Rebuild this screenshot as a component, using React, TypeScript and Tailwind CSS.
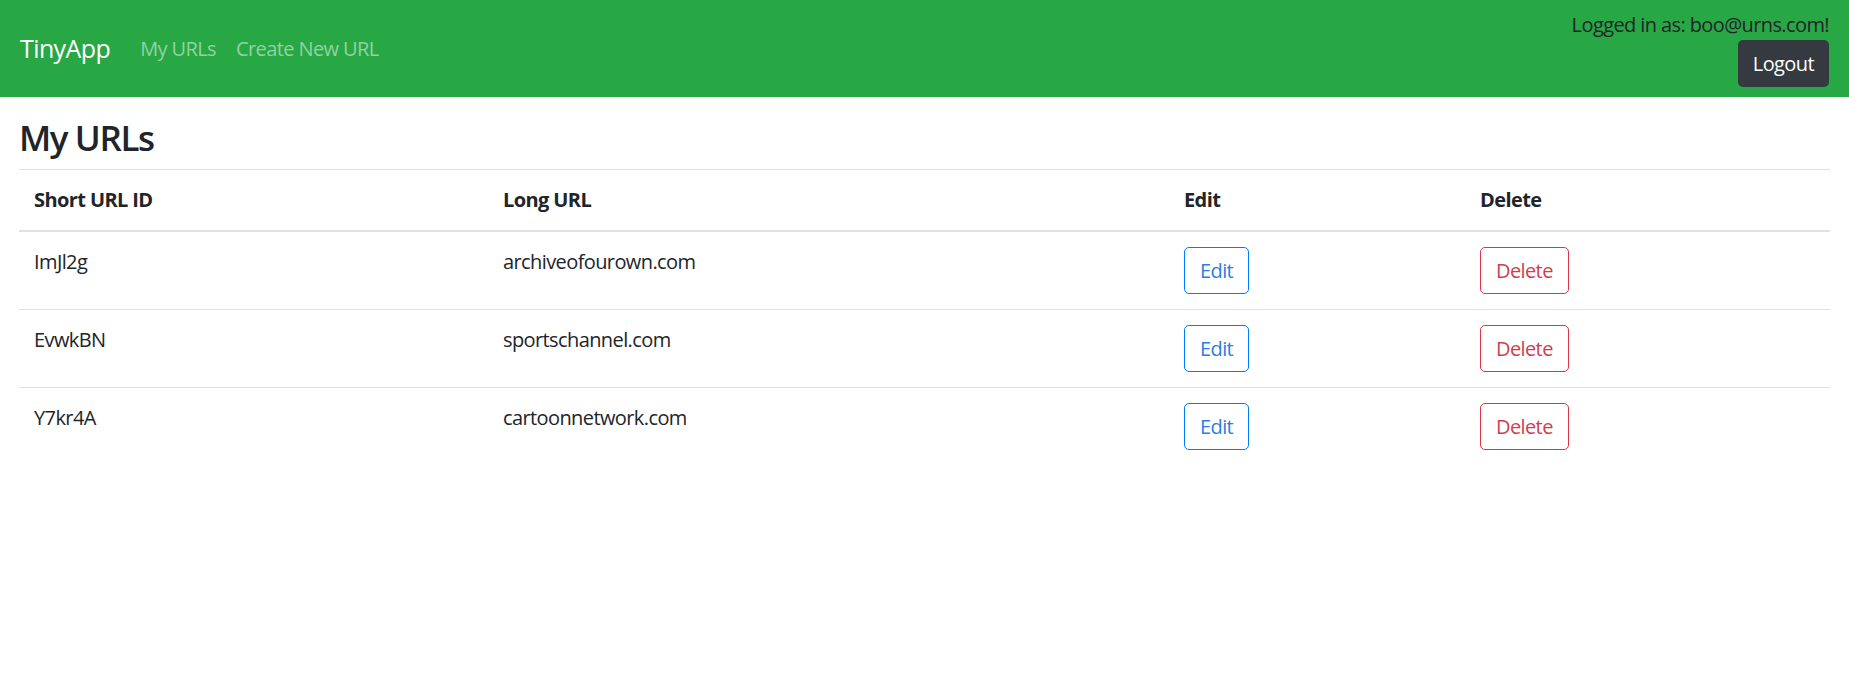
import React from "react";

const rows = [
  { id: "ImJl2g", url: "archiveofourown.com" },
  { id: "EvwkBN", url: "sportschannel.com" },
  { id: "Y7kr4A", url: "cartoonnetwork.com" },
];

export default function App() {
  return (
    <div
      className="min-h-[692px] bg-white text-[#212529] text-[20px] leading-[1.5] tracking-[-0.03em]"
      style={{ fontFamily: '"Open Sans", "Noto Sans", sans-serif' }}
    >
      <nav className="flex items-center justify-between bg-[#28a745] px-[20px] py-[10px]">
        <div className="flex items-center">
          <span className="mr-[20px] py-[6px] text-[25px] leading-[1.5] text-white">TinyApp</span>
          <span className="px-[10px] py-[10px] text-[#93d2a2]">My URLs</span>
          <span className="px-[10px] py-[10px] text-[#93d2a2]">Create New URL</span>
        </div>
        <div className="flex flex-col items-end">
          <span className="text-[#212529]">Logged in as: boo@urns.com!</span>
          <button className="h-[47px] rounded-[5px] bg-[#343a40] px-[15px] text-white">Logout</button>
        </div>
      </nav>
      <div className="px-[19px]">
        <h3 className="mt-[20px] mb-[10px] text-[35px] font-semibold leading-[1.2] tracking-[-0.04em]">My URLs</h3>
        <table className="w-full text-left">
          <colgroup>
            <col className="w-[469px]" />
            <col className="w-[681px]" />
            <col className="w-[296px]" />
            <col />
          </colgroup>
          <thead>
            <tr>
              <th className="border-t border-b-2 border-[#dee2e6] p-[15px] align-bottom font-bold">Short URL ID</th>
              <th className="border-t border-b-2 border-[#dee2e6] p-[15px] align-bottom font-bold">Long URL</th>
              <th className="border-t border-b-2 border-[#dee2e6] p-[15px] align-bottom font-bold">Edit</th>
              <th className="border-t border-b-2 border-[#dee2e6] p-[15px] align-bottom font-bold">Delete</th>
            </tr>
          </thead>
          <tbody>
            {rows.map((r, i) => (
              <tr key={r.id}>
                <td className={`p-[15px] align-top ${i > 0 ? "border-t border-[#dee2e6]" : ""}`}>{r.id}</td>
                <td className={`p-[15px] align-top ${i > 0 ? "border-t border-[#dee2e6]" : ""}`}>{r.url}</td>
                <td className={`p-[15px] align-top ${i > 0 ? "border-t border-[#dee2e6]" : ""}`}>
                  <button className="h-[47px] rounded-[5px] border border-[#007bff] px-[15px] text-[#2a7ee0]">Edit</button>
                </td>
                <td className={`p-[15px] align-top ${i > 0 ? "border-t border-[#dee2e6]" : ""}`}>
                  <button className="h-[47px] rounded-[5px] border border-[#dc3545] px-[15px] text-[#cf3e4d]">Delete</button>
                </td>
              </tr>
            ))}
          </tbody>
        </table>
      </div>
    </div>
  );
}
